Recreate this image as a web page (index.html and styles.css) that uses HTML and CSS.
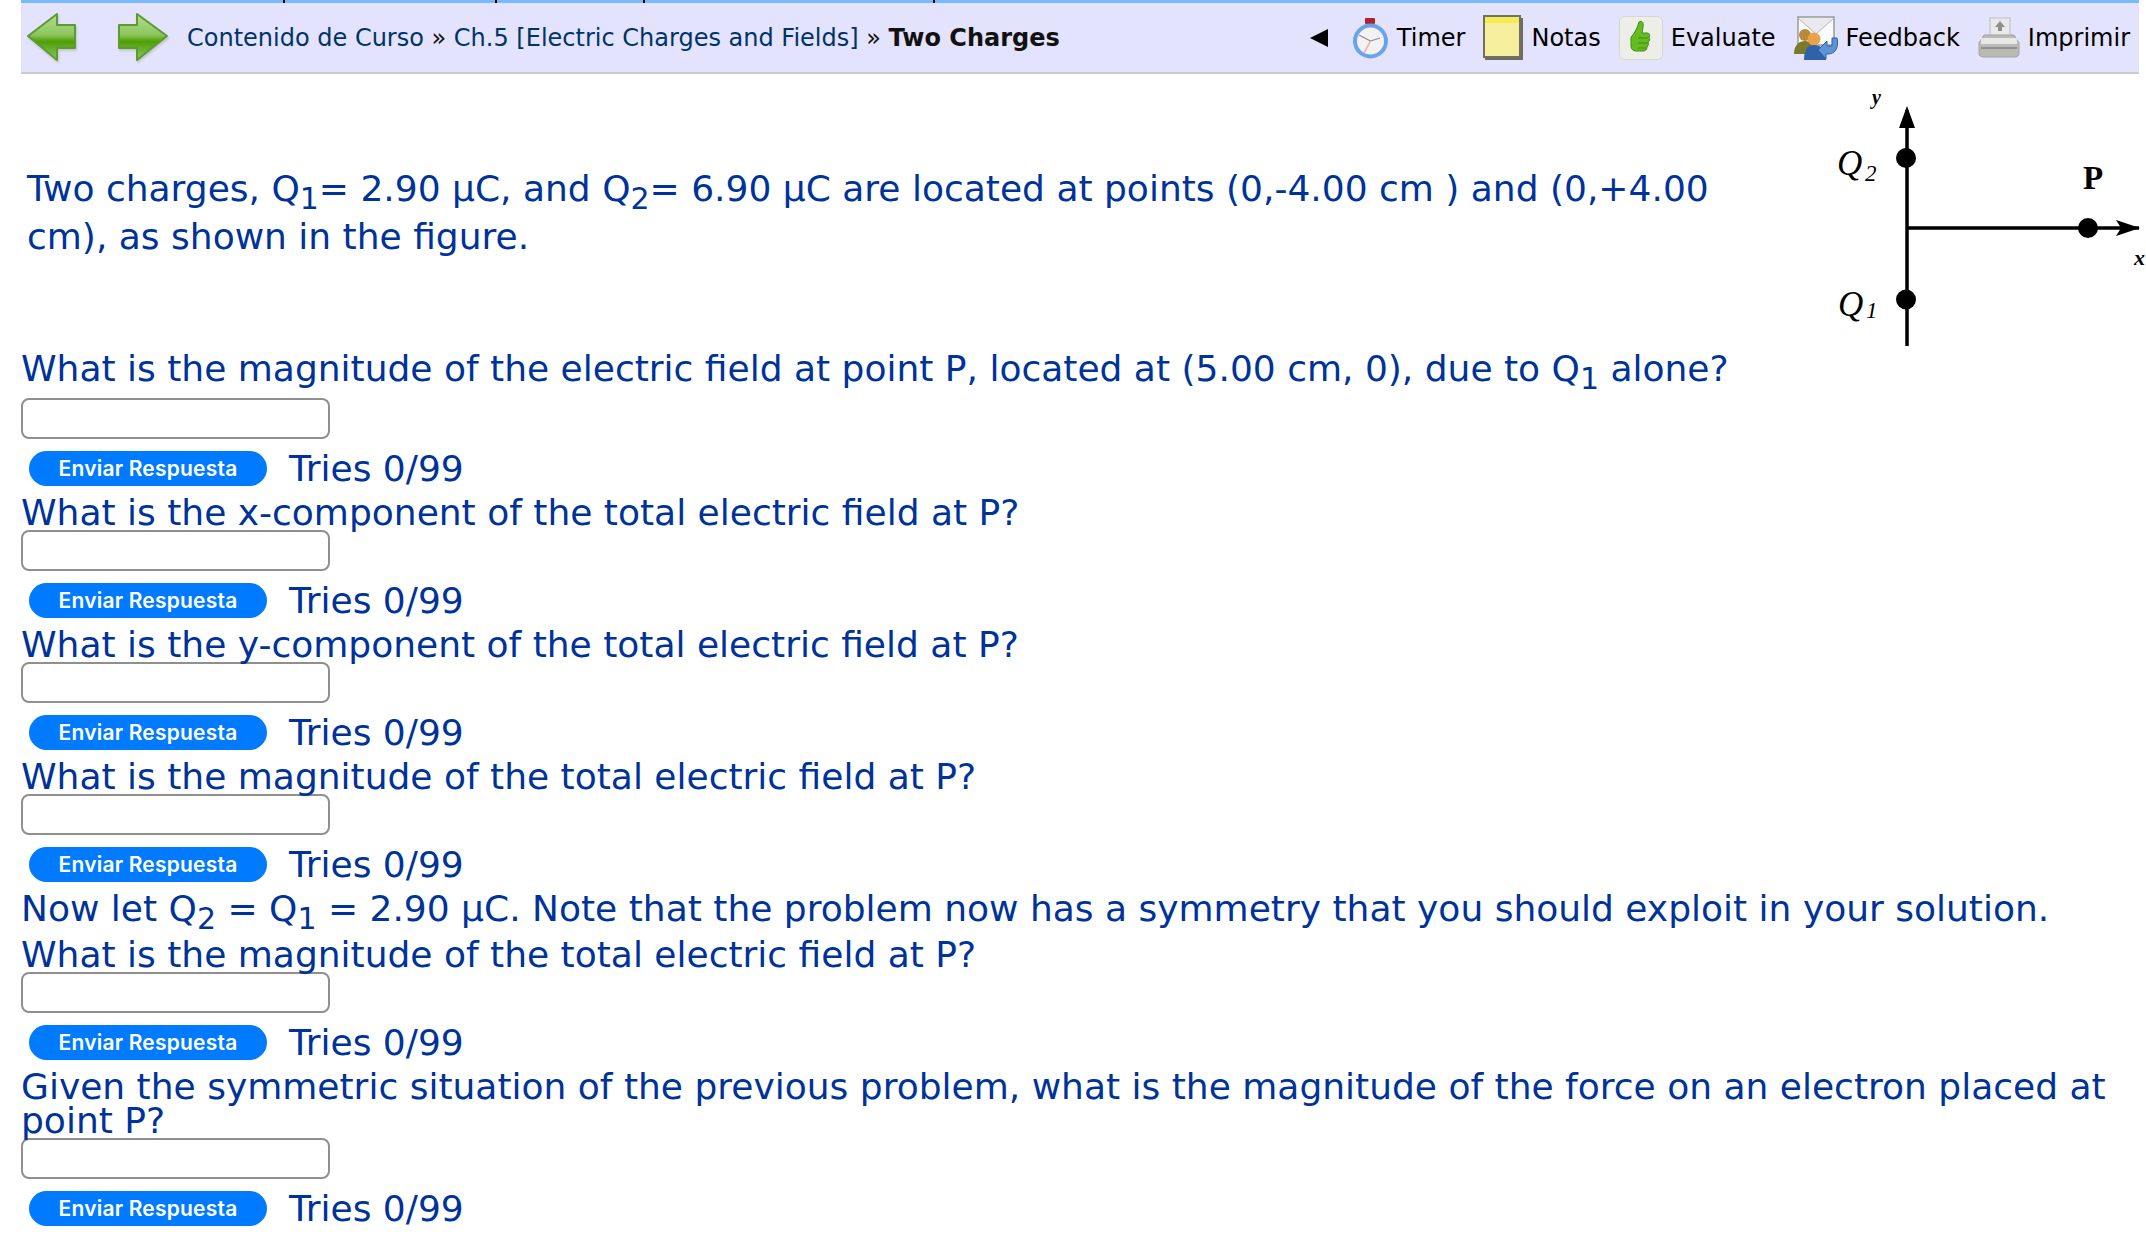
FILE: index.html
```html
<!DOCTYPE html>
<html lang="en">
<head>
  <meta charset="UTF-8">
  <title>Two Charges</title>
  <link rel="stylesheet" href="styles.css">
</head>
<body>
<div class="tabs"><span class="tab t1"></span><span class="tab t2"></span><span class="tab t3"></span><span class="tab t4"></span></div>
<div class="nav">
  <svg class="arrow" viewBox="0 0 50 52">
    <defs>
      <linearGradient id="green" x1="0" y1="0" x2="0" y2="1">
        <stop offset="0" stop-color="#b5dc93"/>
        <stop offset="0.45" stop-color="#8cc65c"/>
        <stop offset="0.6" stop-color="#4f9f06"/>
        <stop offset="1" stop-color="#8cc860"/>
      </linearGradient>
    </defs>
    <path d="M1 24 30 2V13H48V36H30V48Z" fill="url(#green)" stroke="#5d9a34" stroke-width="2" stroke-linejoin="round"/>
  </svg>
  <svg class="arrow next" viewBox="0 0 50 52">
    <path d="M49 24 19 2V13H1V36H19V48Z" fill="url(#green)" stroke="#5d9a34" stroke-width="2" stroke-linejoin="round"/>
  </svg>
  <div class="crumbs">Contenido de Curso <span class="sep">»</span> Ch.5 [Electric Charges and Fields] <span class="sep">»</span> <b>Two Charges</b></div>
  <div class="tools">
    <span class="collapse"></span>
    <a class="tool timer">
      <svg width="37" height="42" viewBox="0 0 37 42">
        <rect x="13" y="1" width="10" height="6" rx="1" fill="#b3202c"/>
        <circle cx="18.5" cy="24" r="15.5" fill="#f3f1f2" stroke="#6aa4e8" stroke-width="4"/>
        <path d="M18.500 24 7 18M18.500 24 28 21" stroke="#8a8a92" stroke-width="1.200" fill="none"/>
        <path d="M18.500 24 12 36" stroke="#f0a8a0" stroke-width="1.500" fill="none"/>
      </svg>
      Timer
    </a>
    <a class="tool notas">
      <svg width="40" height="45" viewBox="0 0 40 45">
        <rect x="2" y="3" width="38" height="42" fill="#6b6b60"/>
        <rect x="1" y="1" width="36" height="41" fill="#f5ee9c" stroke="#6f6f62" stroke-width="2"/>
        <rect x="2" y="2" width="34" height="6" fill="#f3ec52"/>
      </svg>
      Notas
    </a>
    <a class="tool evaluate">
      <svg width="44" height="44" viewBox="0 0 44 44">
        <rect x="0.500" y="0.500" width="43" height="43" rx="5" fill="#eeeee8" stroke="#d6d6d0"/>
        <path d="M20 6c3-2 5 1 4 5l-1 6h5c3 0 3 3 2 4 1 2 1 4-1 5 1 2 0 4-1 5 0 3-2 4-4 4h-7c-3 0-5-2-5-5V21c3-3 6-8 8-15Z" fill="#62bc22" stroke="#3f8f12"/>
        <path d="M19 22h10M19 27h10M19 32h8" stroke="#3f8f12" fill="none"/>
      </svg>
      Evaluate
    </a>
    <a class="tool feedback">
      <svg width="44" height="44" viewBox="0 0 44 44">
        <rect x="4" y="1" width="36" height="28" fill="#fbfbfb" stroke="#9a9a9a" stroke-width="1.500"/>
        <path d="M4 2 22 18 40 2" fill="#e9e9ee" stroke="#b5b5bb"/>
        <circle cx="11" cy="19" r="6" fill="#b98a3c"/>
        <path d="M0 38c0-9 5-13 11-13s8 5 8 13Z" fill="#7a7a2a"/>
        <circle cx="20" cy="23" r="6.500" fill="#eba04a"/>
        <path d="M10 44c0-11 4-15 10-15s12 4 12 15Z" fill="#2f62a8"/>
        <path d="M24 34 33 25v5h5v-8h5c2 8-1 16-9 16h-2v5Z" fill="#5b94d8" stroke="#2f5f9f"/>
      </svg>
      Feedback
    </a>
    <a class="tool imprimir">
      <svg width="42" height="42" viewBox="0 0 42 42">
        <rect x="12" y="1" width="20" height="20" fill="#e9e9e9" stroke="#bdbdbd"/>
        <path d="M22 4 27 10H24V14H20V10H17Z" fill="#8d8d8d"/>
        <path d="M6 18H36L41 26V36C41 39 39 40 36 40H6C3 40 1 39 1 36V26Z" fill="#b9bab5" stroke="#a2a39e"/>
        <rect x="3" y="21" width="36" height="6" fill="#e8e8e4"/>
        <rect x="3" y="30" width="36" height="2" fill="#8e8f8a"/>
      </svg>
      Imprimir
    </a>
  </div>
</div>

<div class="intro">
  <p class="intro-text">Two charges, Q<sub>1</sub>= 2.90 µC, and Q<sub>2</sub>= 6.90 µC are located at points (0,-4.00 cm ) and (0,+4.00 cm), as shown in the figure.</p>
  <svg class="figure" width="366" height="278" viewBox="0 0 366 278">
    <g class="axes">
      <path d="M108 36V272M107 154H340"/>
    </g>
    <path d="M108 32 116 54H100Z"/>
    <path d="M341 154 317 146 322 154 317 162Z"/>
    <circle cx="107" cy="84" r="10"/>
    <circle cx="107" cy="225.500" r="10"/>
    <circle cx="289" cy="154" r="10"/>
    <text class="lab em" x="73" y="30" font-size="20" font-weight="bold">y</text>
    <text class="lab em" x="38" y="101" font-size="35">Q</text>
    <text class="lab em" x="66" y="107" font-size="23">2</text>
    <text class="lab" x="284" y="115" font-size="33" font-weight="bold">P</text>
    <text class="lab em" x="335" y="191" font-size="22" font-weight="bold">x</text>
    <text class="lab em" x="39" y="242" font-size="35">Q</text>
    <text class="lab em" x="67" y="244" font-size="23">1</text>
  </svg>
</div>

<div class="question">
  <div class="q-text has-sub">What is the magnitude of the electric field at point P, located at (5.00 cm, 0), due to Q<sub>1</sub> alone?</div>
  <input class="answer" type="text">
  <div class="submit-row"><button class="send">Enviar Respuesta</button><span class="tries">Tries 0/99</span></div>
</div>
<div class="question">
  <div class="q-text">What is the x-component of the total electric field at P?</div>
  <input class="answer" type="text">
  <div class="submit-row"><button class="send">Enviar Respuesta</button><span class="tries">Tries 0/99</span></div>
</div>
<div class="question">
  <div class="q-text">What is the y-component of the total electric field at P?</div>
  <input class="answer" type="text">
  <div class="submit-row"><button class="send">Enviar Respuesta</button><span class="tries">Tries 0/99</span></div>
</div>
<div class="question">
  <div class="q-text">What is the magnitude of the total electric field at P?</div>
  <input class="answer" type="text">
  <div class="submit-row"><button class="send">Enviar Respuesta</button><span class="tries">Tries 0/99</span></div>
</div>
<div class="q-text has-sub">Now let Q<sub>2</sub> = Q<sub>1</sub> = 2.90 µC. Note that the problem now has a symmetry that you should exploit in your solution.</div>
<div class="question">
  <div class="q-text">What is the magnitude of the total electric field at P?</div>
  <input class="answer" type="text">
  <div class="submit-row"><button class="send">Enviar Respuesta</button><span class="tries">Tries 0/99</span></div>
</div>
<div class="question">
  <div class="q-text">Given the symmetric situation of the previous problem, what is the magnitude of the force on an electron placed at point P?</div>
  <input class="answer" type="text">
  <div class="submit-row"><button class="send">Enviar Respuesta</button><span class="tries">Tries 0/99</span></div>
</div>
</body>
</html>
```

FILE: styles.css
```css
body {
  margin: 0;
  padding: 0 7px 0 21px;
  font-family: "DejaVu Sans", sans-serif;
  font-size: 36px;
  color: #003399;
  background: #fff;
}

sub {
  line-height: 0;
}

.tabs {
  display: flex;
  height: 3px;
  background: #78b8fc;
}
.tab {
  border-right: 2px solid #000;
}
.t1 { width: 262px; }
.t2 { width: 210px; }
.t3 { width: 146px; }
.t4 { width: 288px; }

.nav {
  display: flex;
  align-items: center;
  height: 69px;
  padding-left: 6px;
  background: #e3e3fd;
  border-bottom: 2px solid #ccc;
  font-size: 24px;
}
.arrow {
  width: 50px;
  height: 52px;
  flex-shrink: 0;
  filter: drop-shadow(1px 2px 1px #c4c4cc);
}
.next {
  margin-left: 41px;
}
.crumbs {
  margin-left: 19px;
  color: #003366;
  white-space: nowrap;
}
.crumbs b {
  color: #111;
}
.sep {
  color: #111;
}

.tools {
  display: flex;
  align-items: center;
  margin-left: auto;
  padding-right: 9px;
  color: #000;
}
.tool {
  display: flex;
  align-items: center;
  gap: 8px;
  margin-left: 18px;
  white-space: nowrap;
}
.timer { margin-left: 24px; }
.collapse {
  width: 0;
  height: 0;
  border-top: 9px solid transparent;
  border-bottom: 9px solid transparent;
  border-right: 18px solid #000;
}

.intro {
  display: flex;
  justify-content: space-between;
  align-items: center;
  height: 278px;
}
.intro-text {
  margin: 0 0 0 6px;
  width: 1730px;
  line-height: 48px;
}
.figure {
  flex-shrink: 0;
  margin-right: -26px;
  color: #000;
}
.axes path {
  stroke: #000;
  stroke-width: 3.500;
  fill: none;
}
.lab {
  font-family: "Liberation Serif", serif;
}
.em {
  font-style: italic;
}

.q-text {
  line-height: 34px;
}
.has-sub {
  padding-bottom: 12px;
}
.question {
  margin-bottom: 10px;
}
.answer {
  display: block;
  box-sizing: border-box;
  width: 309px;
  height: 41px;
  padding: 0 8px;
  background: #fff;
  border: 2px solid #8f8f8f;
  border-radius: 8px;
}
.question .q-text.has-sub + .answer {
  margin-top: 0;
}
.submit-row {
  display: flex;
  align-items: center;
  height: 35px;
  margin-top: 12px;
  padding-left: 8px;
}
.send {
  width: 238px;
  height: 35px;
  padding: 0;
  background: #007bff;
  color: #fff;
  border: 0;
  border-radius: 18px;
  font-family: Inter, sans-serif;
  font-size: 21px;
  font-weight: 600;
  letter-spacing: 0.2px;
}
.tries {
  margin-left: 22px;
}
```
